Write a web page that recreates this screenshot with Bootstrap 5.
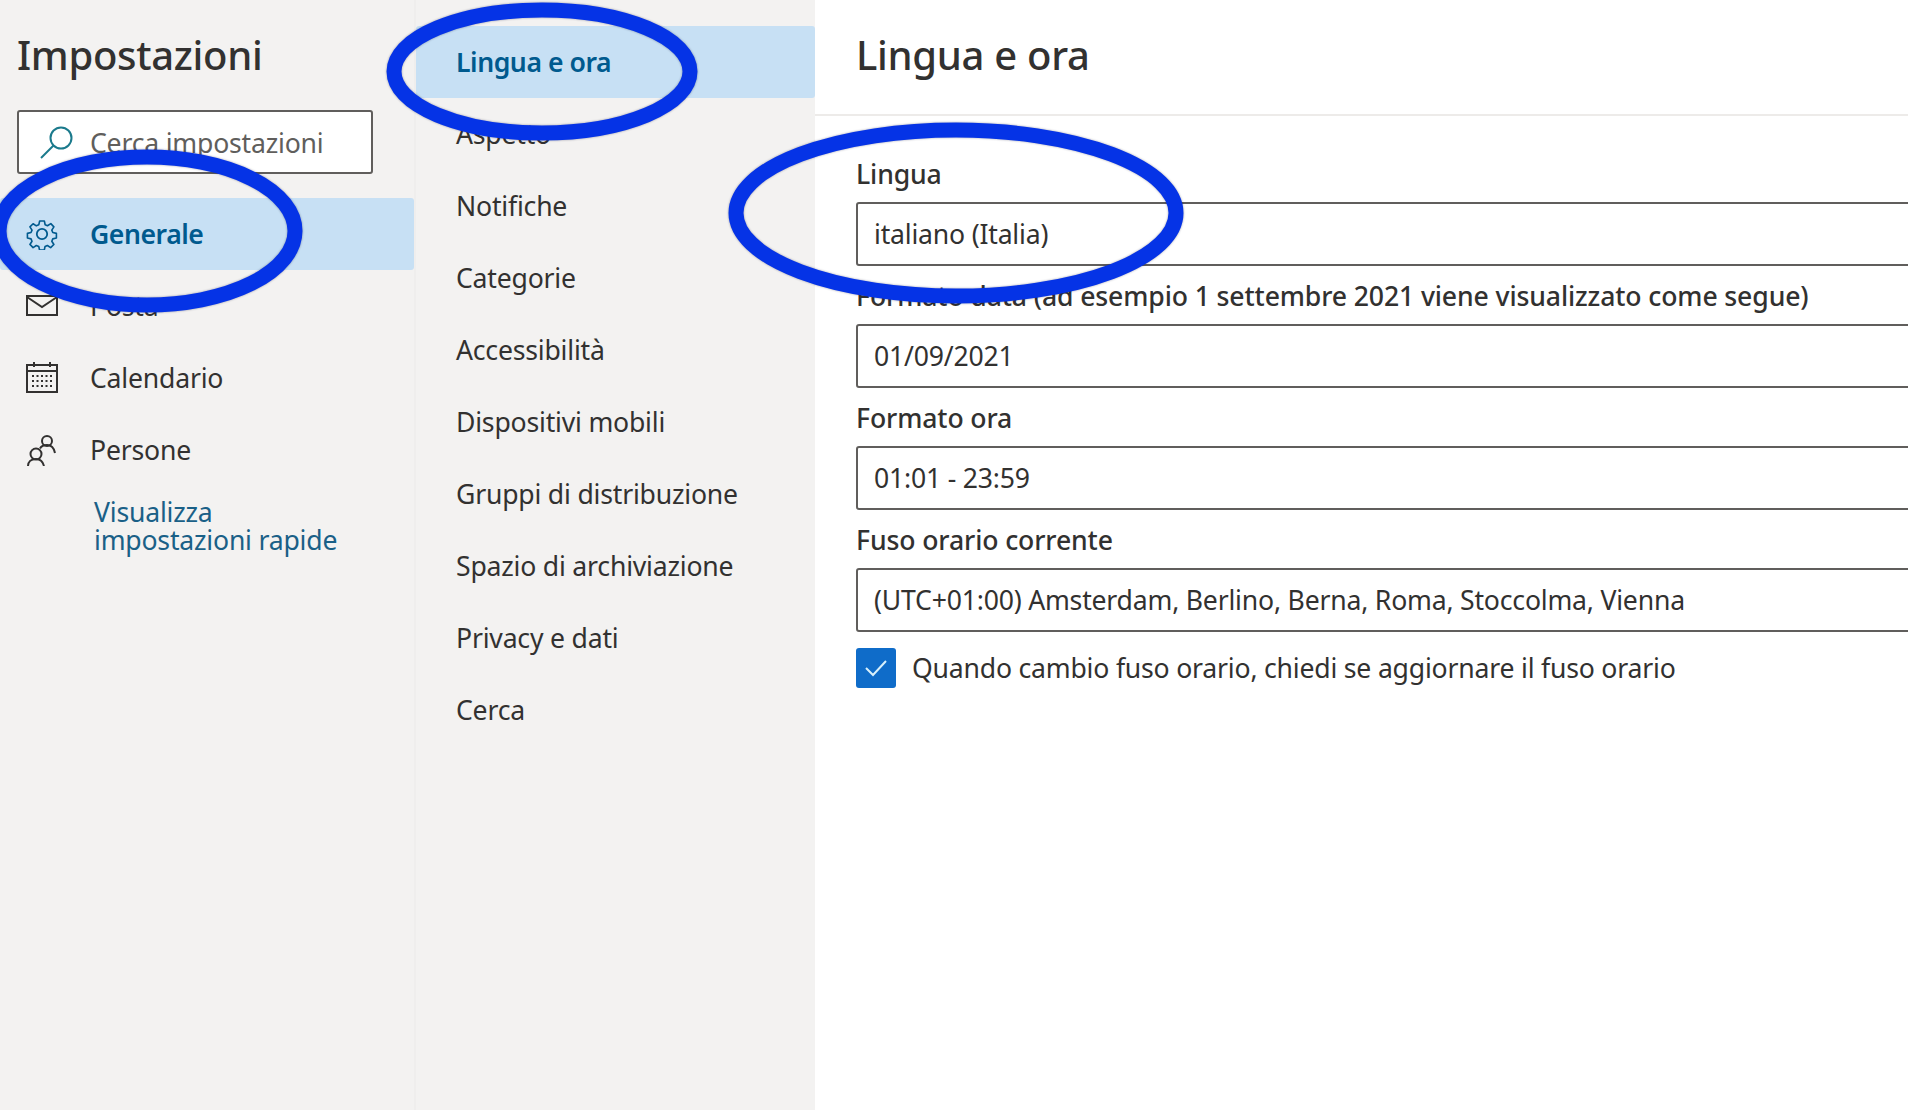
<!DOCTYPE html>
<html lang="it">
<head>
<meta charset="utf-8">
<title>Impostazioni</title>
<link rel="stylesheet" href="https://cdn.jsdelivr.net/npm/bootstrap@5.3.0/dist/css/bootstrap.min.css">
<style>
html,body{height:100%;overflow:hidden;}
body{font-family:"Noto Sans","Open Sans","Liberation Sans",sans-serif;color:#323130;background:#fff;font-size:26.6px;letter-spacing:-.2px;}
.shell{height:1110px;width:1908px;position:relative;}
.pane-a{width:414px;background:#f3f2f1;flex:none;}
.pane-b{width:401px;background:#f3f2f1;flex:none;border-left:2px solid #efeeed;}
.pane-c{flex:1;min-width:0;overflow:hidden;}
.page-title{font-size:40px;font-weight:500;line-height:56px;margin:0;letter-spacing:-.3px;}
.pane-a .page-title{padding:27px 0 0 17px;}
.search-box{margin:27px 41px 24px 17px;height:64px;background:#fff;border:2px solid #605e5c;border-radius:3px;padding-left:20px;gap:15px;color:#605e5c;}
.search-box span{padding-top:4px;}
.nav-row{height:72px;display:flex;align-items:center;color:#323130;text-decoration:none;}
.pane-a .nav-row{padding-left:26px;gap:32px;}
.pane-a .nav-row span{padding-top:2px;}
.pane-b .nav-row{padding:2px 0 0 40px;}
.pane-b .nav-stack{padding-top:26px;}
.nav-row.is-on{background:#c7e0f4;color:#005a8e;font-weight:600;letter-spacing:-.45px;border-radius:3px;}
.nav-icon{width:32px;height:32px;flex:none;}
.quick-link{display:block;margin:12px 0 0 94px;line-height:28px;color:#1a6087;text-decoration:none;}
.head-row{height:116px;border-bottom:2px solid #edebe9;padding:27px 0 0 41px;}
.form-area{padding:27px 0 0 41px;}
.field-label{font-size:26.6px;font-weight:500;line-height:38px;letter-spacing:-.12px;padding:12px 0 9px;margin:0;}
.field-box{height:64px;margin:0 -20px -1px 0;border:2px solid #605e5c;border-radius:3px;padding:2px 16px 0;background:#fff;display:flex;align-items:center;}
.tick-box{width:40px;height:40px;background:#0f6cc9;border-radius:3px;flex:none;}
.tick-text{padding-top:2px;}
.ink-overlay{position:absolute;left:0;top:0;width:1908px;height:1110px;pointer-events:none;filter:drop-shadow(0 0 1px rgba(0,0,40,.35));}
</style>
</head>
<body>
<div class="shell d-flex">
  <div class="pane-a">
    <h1 class="page-title">Impostazioni</h1>
    <div class="search-box d-flex align-items-center">
      <svg width="36" height="36" viewBox="0 0 36 36" fill="none" stroke="#1b7a8c" stroke-width="2"><circle cx="22" cy="14" r="10.5"/><path d="M14.5 21.5 2 34"/></svg>
      <span>Cerca impostazioni</span>
    </div>
    <a class="nav-row is-on" href="#">
      <svg class="nav-icon" viewBox="0 0 32 32" fill="none" stroke="#005a8e" stroke-width="1.8" stroke-linejoin="round"><circle cx="16" cy="16" r="5.2"/><path d="M13.4 1.5h5.2l.9 4.2 2.6 1.1 3.7-2.3 3.4 3.6-2.3 3.6 1.1 2.7 4 .9v5.2l-4 .9-1.1 2.6 2.3 3.7-3.6 3.4-3.6-2.3-2.6 1.1-.9 4h-5.2l-.9-4-2.7-1.1-3.6 2.3-3.5-3.5 2.3-3.6-1.1-2.6-4-.9v-5.2l4-.9 1.1-2.7-2.3-3.6 3.5-3.5 3.6 2.3 2.7-1.1z" transform="translate(1.6 1.6) scale(.9)"/></svg>
      <span>Generale</span>
    </a>
    <a class="nav-row" href="#">
      <svg class="nav-icon" viewBox="0 0 32 32" fill="none" stroke="#323130" stroke-width="2"><rect x="1" y="6" width="30" height="19"/><path d="M1 7l15 10L31 7"/></svg>
      <span>Posta</span>
    </a>
    <a class="nav-row" href="#">
      <svg class="nav-icon" viewBox="0 0 32 32" fill="none" stroke="#323130" stroke-width="2"><rect x="1" y="3" width="30" height="27"/><path d="M1 9h30M8 0v5M24 0v5"/><path d="M6 14h20M6 19h20M6 24h20" stroke-dasharray="2 2.5"/></svg>
      <span>Calendario</span>
    </a>
    <a class="nav-row" href="#">
      <svg class="nav-icon" viewBox="0 0 32 32" fill="none" stroke="#323130" stroke-width="2"><circle cx="21" cy="7" r="5"/><path d="M14 14.5c1-2 4-3.500 7-3.500 4 0 7 3 8 8"/><circle cx="10" cy="20" r="5.500"/><path d="M2 32c0-4 3-7 8-7s7 3 8 7"/></svg>
      <span>Persone</span>
    </a>
    <a class="quick-link" href="#">Visualizza<br>impostazioni rapide</a>
  </div>
  <div class="pane-b">
    <div class="nav-stack">
      <a class="nav-row is-on" href="#">Lingua e ora</a>
      <a class="nav-row" href="#">Aspetto</a>
      <a class="nav-row" href="#">Notifiche</a>
      <a class="nav-row" href="#">Categorie</a>
      <a class="nav-row" href="#">Accessibilità</a>
      <a class="nav-row" href="#">Dispositivi mobili</a>
      <a class="nav-row" href="#">Gruppi di distribuzione</a>
      <a class="nav-row" href="#">Spazio di archiviazione</a>
      <a class="nav-row" href="#">Privacy e dati</a>
      <a class="nav-row" href="#">Cerca</a>
    </div>
  </div>
  <div class="pane-c">
    <div class="head-row"><h2 class="page-title">Lingua e ora</h2></div>
    <div class="form-area">
      <p class="field-label">Lingua</p>
      <div class="field-box">italiano (Italia)</div>
      <p class="field-label">Formato data (ad esempio 1 settembre 2021 viene visualizzato come segue)</p>
      <div class="field-box">01/09/2021</div>
      <p class="field-label">Formato ora</p>
      <div class="field-box">01:01 - 23:59</div>
      <p class="field-label">Fuso orario corrente</p>
      <div class="field-box">(UTC+01:00) Amsterdam, Berlino, Berna, Roma, Stoccolma, Vienna</div>
      <div class="d-flex align-items-center mt-3">
        <span class="tick-box d-flex align-items-center justify-content-center">
          <svg width="24" height="20" viewBox="0 0 24 20" fill="none" stroke="#d8f0fb" stroke-width="2"><path d="M2 10l7 7L22 3"/></svg>
        </span>
        <span class="ms-3 tick-text">Quando cambio fuso orario, chiedi se aggiornare il fuso orario</span>
      </div>
    </div>
  </div>
  <svg class="ink-overlay" viewBox="0 0 1908 1110" fill="none" stroke="#0533e6" stroke-width="15">
    <ellipse cx="147" cy="231" rx="148" ry="74"/>
    <ellipse cx="542" cy="71.500" rx="148" ry="61.500"/>
    <ellipse cx="956" cy="213" rx="220" ry="83"/>
  </svg>
</div>
<script src="https://cdn.jsdelivr.net/npm/bootstrap@5.3.0/dist/js/bootstrap.bundle.min.js"></script>
</body>
</html>
